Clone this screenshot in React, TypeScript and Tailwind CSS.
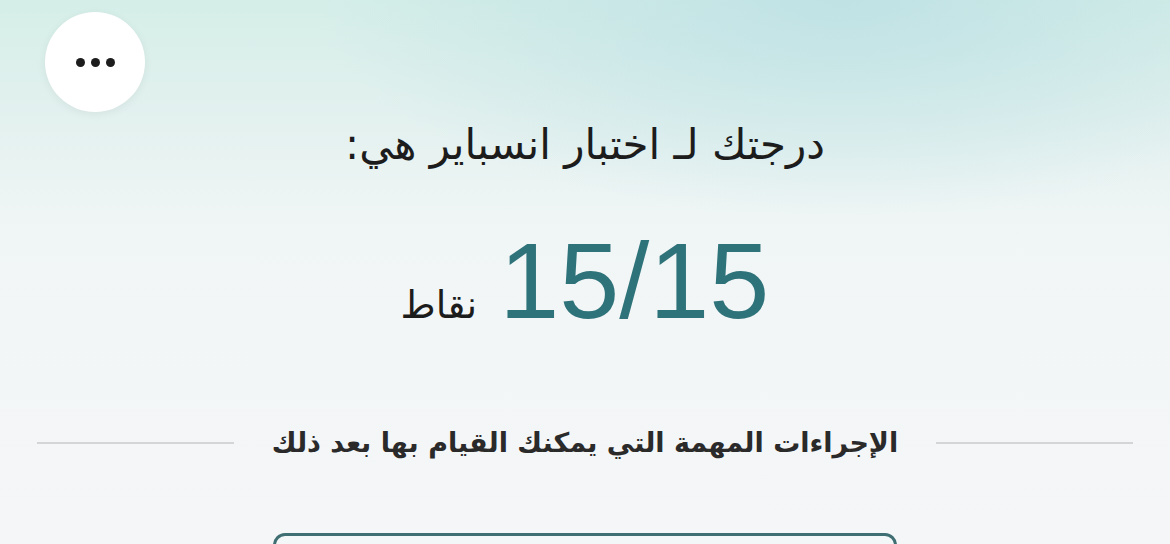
import React from "react";

export default function App() {
  return (
    <div
      dir="rtl"
      className="w-[1170px] h-[544px] overflow-hidden flex flex-col bg-[radial-gradient(ellipse_45%_40%_at_72%_0%,rgba(188,224,228,0.85),rgba(188,224,228,0)),linear-gradient(180deg,#d5eee8_0%,#e3f1ef_22%,#eff5f5_40%,#f3f6f7_58%,#f4f6f7_100%)] font-['Liberation_Sans','DejaVu_Sans',sans-serif]"
    >
      {/* top bar */}
      <div className="flex justify-end pt-[12px] pl-[45px]">
        <button className="w-[100px] h-[100px] rounded-full bg-white shadow-[0_2px_10px_rgba(0,0,0,0.06)] flex items-center justify-center gap-[6px]">
          <span className="w-[9px] h-[9px] rounded-full bg-[#1d1d1d]" />
          <span className="w-[9px] h-[9px] rounded-full bg-[#1d1d1d]" />
          <span className="w-[9px] h-[9px] rounded-full bg-[#1d1d1d]" />
        </button>
      </div>

      {/* score */}
      <div className="flex flex-col items-center">
        <h1 className="mt-[6px] text-[42px] leading-[54px] text-[#1c1c1c] font-['DejaVu_Sans',sans-serif]">
          درجتك لـ اختبار انسباير هي:
        </h1>
        <div className="mt-[54px] flex items-baseline gap-[22px]" dir="ltr">
          <span className="text-[38px] text-[#1c1c1c] font-['DejaVu_Sans',sans-serif]">نقاط</span>
          <span className="text-[108px] leading-[110px] text-[#2f737a] font-['Liberation_Sans',sans-serif]">
            15/15
          </span>
        </div>
      </div>

      {/* divider */}
      <div className="mt-[87px] flex items-center px-[37px]">
        <div className="flex-1 h-[2px] bg-[#d3d5d6]" />
        <span className="mx-[38px] text-[27px] font-bold text-[#2a2a2a] font-['DejaVu_Sans',sans-serif]">
          الإجراءات المهمة التي يمكنك القيام بها بعد ذلك
        </span>
        <div className="flex-1 h-[2px] bg-[#d3d5d6]" />
      </div>

      {/* action button */}
      <div className="mt-[69px] flex justify-center">
        <div className="w-[624px] h-[60px] shrink-0 rounded-[12px] border-[3px] border-[#3f6f72] bg-[#f4f7f8]" />
      </div>
    </div>
  );
}
